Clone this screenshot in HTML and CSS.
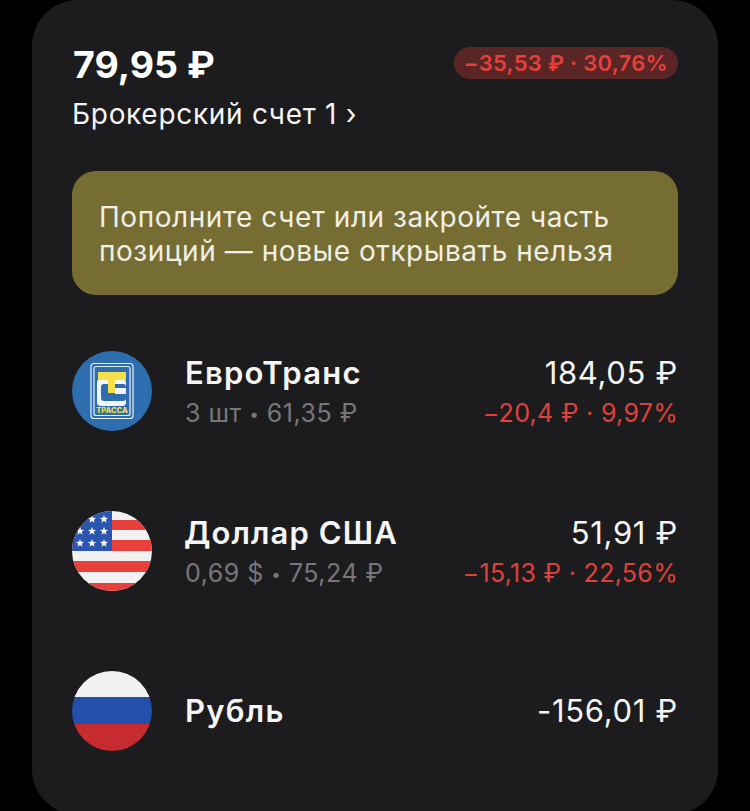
FILE: index.html
```html
<!DOCTYPE html>
<html>
    <head>
        <meta charset="utf-8">
        <title>Брокерский счет</title>
        <link rel="stylesheet" href="styles.css">
    </head>
    <body>
        <div class="card">
            <div class="head">
                <div class="head_left">
                    <div class="total">79,95 ₽</div>
                    <div class="account">Брокерский счет 1 ›</div>
                </div>
                <div class="badge">−35,53 ₽ · 30,76%</div>
            </div>
            <div class="notice">Пополните счет или закройте часть<br>позиций — новые открывать нельзя</div>
            <div class="row">
                <svg class="logo" viewBox="0 0 80 80">
                    <circle cx="40" cy="40" r="40" fill="#2e6dae"/>
                    <rect x="19" y="12.500" width="42" height="55" rx="3" fill="none" stroke="#e8f2fa" stroke-width="1.200"/>
                    <rect x="22" y="15.500" width="36" height="49" rx="2" fill="none" stroke="#e8f2fa" stroke-width="1.200"/>
                    <rect x="25" y="28" width="29" height="27" rx="4" fill="#f2f6fa"/>
                    <rect x="29" y="33" width="25" height="17" rx="3" fill="#2e6dae"/>
                    <rect x="43" y="37" width="11" height="6" fill="#f2f6fa"/>
                    <path d="M26 21H54V29H43V42H36V29H26Z" fill="#f4e04a"/>
                    <text class="logo_text" x="40" y="62">ТРАССА</text>
                </svg>
                <div class="info">
                    <div class="name">ЕвроТранс</div>
                    <div class="sub">3 шт <span class="dot">•</span> 61,35 ₽</div>
                </div>
                <div class="values">
                    <div class="price">184,05 ₽</div>
                    <div class="delta">−20,4 ₽ · 9,97%</div>
                </div>
            </div>
            <div class="row">
                <svg class="logo" viewBox="0 0 80 80">
                    <defs>
                        <clipPath id="us"><circle cx="40" cy="40" r="40"/></clipPath>
                    </defs>
                    <g clip-path="url(#us)">
                        <rect width="80" height="80" fill="#f1f1f1"/>
                        <rect y="9" width="80" height="10" fill="#e8403a"/>
                        <rect y="29" width="80" height="11" fill="#e8403a"/>
                        <rect y="50" width="80" height="11" fill="#e8403a"/>
                        <rect y="72" width="80" height="8" fill="#e8403a"/>
                        <rect width="40" height="40" fill="#2a55b0"/>
                        <g fill="#f4f4f4">
                            <path id="star" d="M20 4l1.100 2.700 3 .2-2.300 1.900.8 2.900-2.600-1.600-2.600 1.600.8-2.900-2.300-1.900 3-.2z"/>
                            <use href="#star" x="12"/>
                            <use href="#star" x="-12" y="12"/>
                            <use href="#star" y="12"/>
                            <use href="#star" x="12" y="12"/>
                            <use href="#star" x="-12" y="24"/>
                            <use href="#star" y="24"/>
                            <use href="#star" x="12" y="24"/>
                        </g>
                    </g>
                </svg>
                <div class="info">
                    <div class="name name_usd">Доллар США</div>
                    <div class="sub">0,69 $ <span class="dot">•</span> 75,24 ₽</div>
                </div>
                <div class="values">
                    <div class="price">51,91 ₽</div>
                    <div class="delta">−15,13 ₽ · 22,56%</div>
                </div>
            </div>
            <div class="row">
                <svg class="logo" viewBox="0 0 80 80">
                    <defs>
                        <clipPath id="ru"><circle cx="40" cy="40" r="40"/></clipPath>
                    </defs>
                    <g clip-path="url(#ru)">
                        <rect width="80" height="26" fill="#f1f1f1"/>
                        <rect y="26" width="80" height="27" fill="#2450ac"/>
                        <rect y="53" width="80" height="27" fill="#c62b30"/>
                    </g>
                </svg>
                <div class="info">
                    <div class="name">Рубль</div>
                </div>
                <div class="values">
                    <div class="price">-156,01 ₽</div>
                </div>
            </div>
        </div>
    </body>
</html>
```

FILE: styles.css
```css
html, body {
    margin:0;
    height:811px;
    overflow:hidden;
    background:#000;
}
body {
    font-family:Inter, "Liberation Sans", sans-serif;
    color:#f5f5f5;
}
.card {
    box-sizing:border-box;
    width:686px;
    height:815px;
    margin-left:32px;
    padding:43px 40px 0;
    background:#1c1c1e;
    border-radius:46px;
}
.head {
    display:flex;
    justify-content:space-between;
    align-items:flex-start;
}
.total {
    margin-left:1px;
    font-size:37.500px;
    line-height:44px;
    font-weight:700;
    color:#fff;
}
.account {
    margin-top:11px;
    font-size:28px;
    line-height:32px;
    letter-spacing:.7px;
}
.badge {
    margin-top:4px;
    padding:0 10px;
    height:32px;
    line-height:32px;
    border-radius:16px;
    background:#5a2525;
    color:#e5403a;
    font-size:22px;
    font-weight:600;
    letter-spacing:.3px;
}
.notice {
    margin-top:41px;
    padding:29px 27px;
    height:124px;
    box-sizing:border-box;
    background:#766d33;
    border-radius:24px;
    font-size:28px;
    line-height:34px;
    letter-spacing:.55px;
    color:#f0efe6;
}
.row {
    display:flex;
    align-items:center;
    height:80px;
    margin-top:56px;
}
.row + .row {
    margin-top:80px;
}
.logo {
    width:80px;
    height:80px;
    flex:none;
}
.logo_text {
    font-size:7.500px;
    font-weight:800;
    fill:#f4e04a;
    text-anchor:middle;
}
.info {
    margin-left:33px;
    flex:1;
}
.name {
    font-size:31px;
    line-height:40px;
    font-weight:600;
    letter-spacing:1.250px;
    color:#f5f5f5;
}
.name_usd {
    margin-left:-1px;
    letter-spacing:1.100px;
}
.sub {
    margin-bottom:-4px;
    font-size:25px;
    line-height:40px;
    letter-spacing:.5px;
    color:#77777b;
}
.dot {
    font-size:17px;
    vertical-align:2px;
}
.values {
    text-align:right;
}
.price {
    font-size:31px;
    line-height:40px;
    letter-spacing:.7px;
    color:#f5f5f5;
}
.delta {
    margin-bottom:-4px;
    font-size:25px;
    line-height:40px;
    letter-spacing:.3px;
    color:#e0413b;
}
```
